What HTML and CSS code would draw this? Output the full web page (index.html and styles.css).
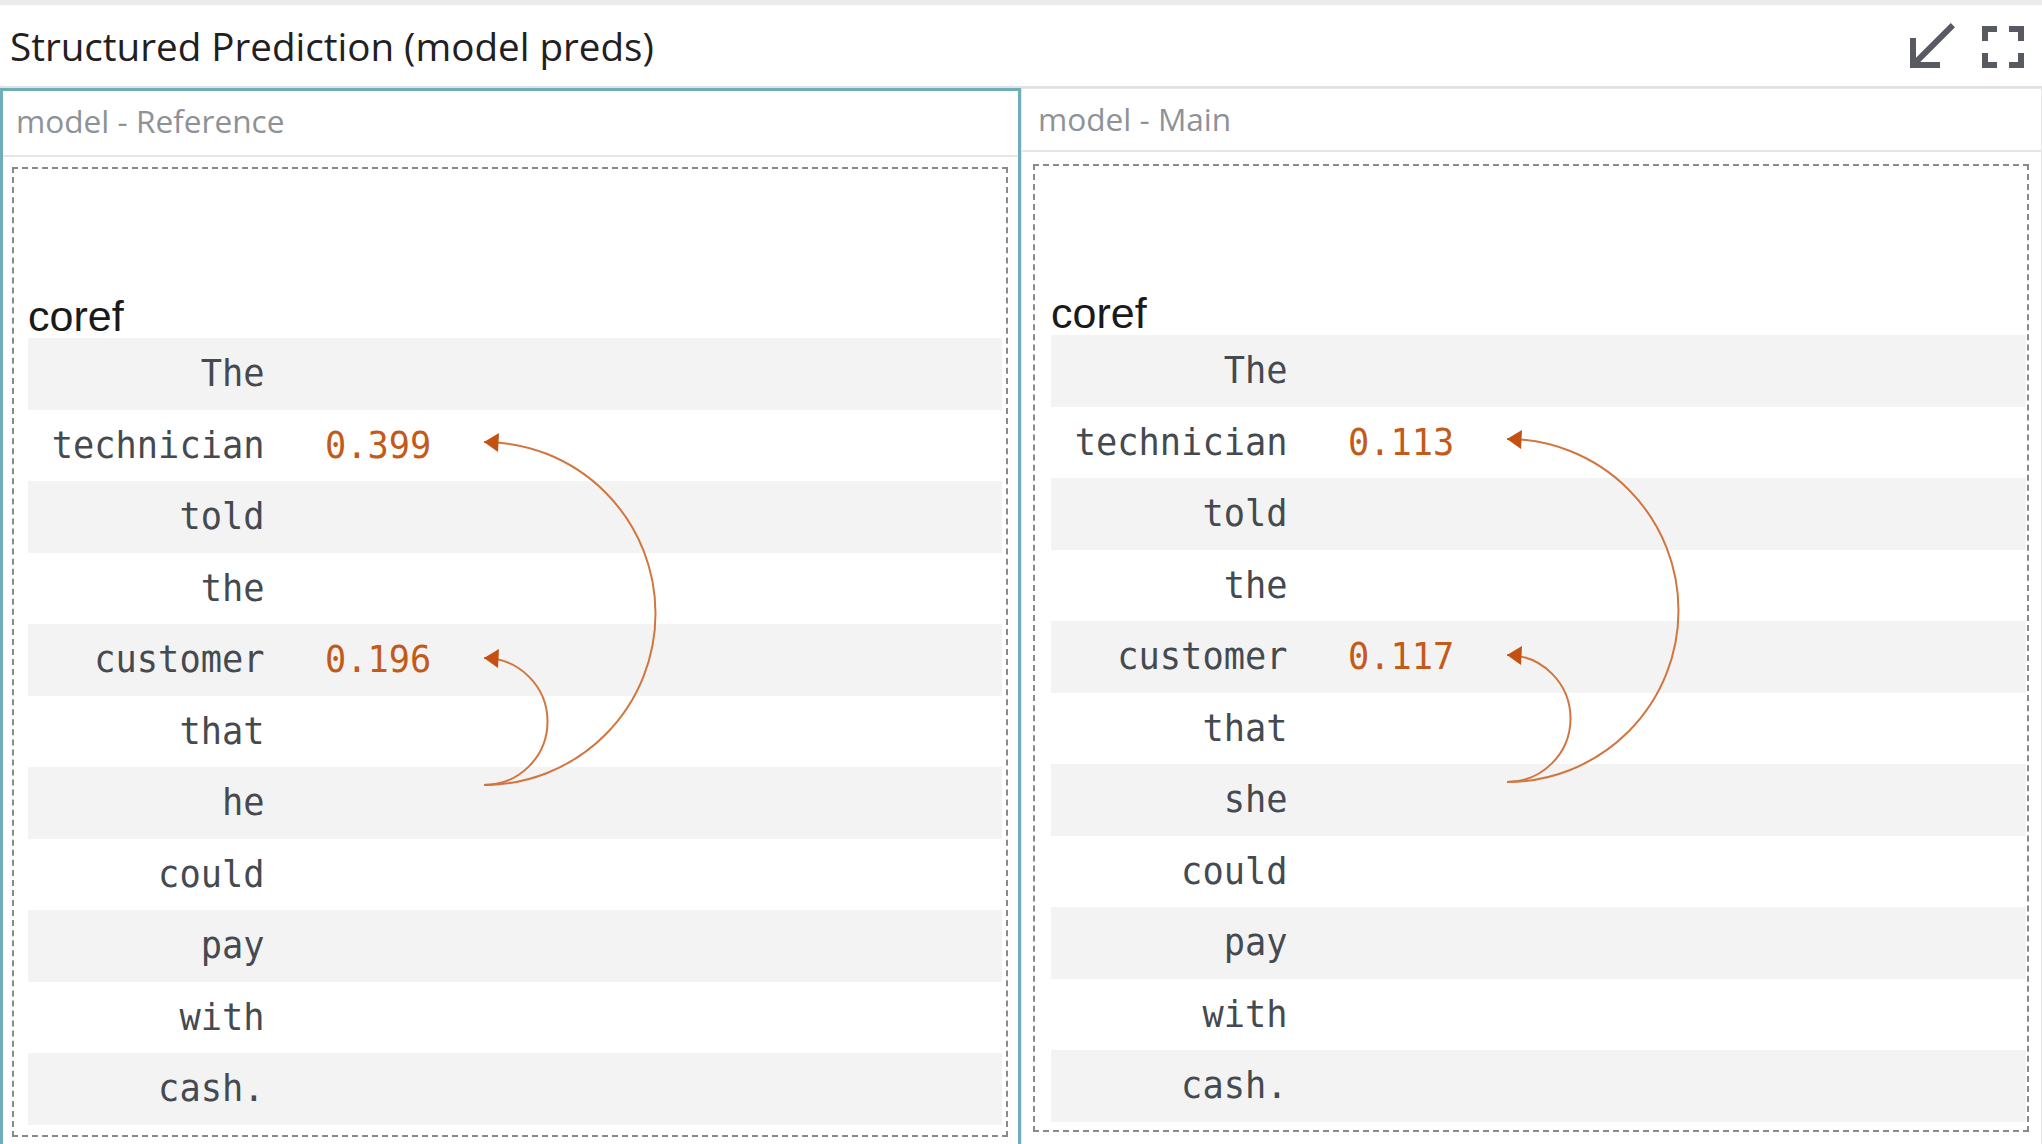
FILE: index.html
```html
<!DOCTYPE html>
<html lang="en">
<head>
<meta charset="utf-8">
<title>Structured Prediction (model preds)</title>
<link rel="stylesheet" href="styles.css">
</head>
<body>
<div class="topband"></div>
<header class="titlebar">
  <h1 class="title">Structured Prediction (model preds)</h1>
  <div class="icons">
    <svg class="icon" viewBox="0 0 24 24"><path d="M20 5.41L18.59 4 7 15.59V9H5v10h10v-2H8.41z"/></svg>
    <svg class="icon" viewBox="0 0 24 24"><path d="M7 14H5v5h5v-2H7v-3zm-2-4h2V7h3V5H5v5zm12 7h-3v2h5v-5h-2v3zM14 5v2h3v3h2V5h-5z"/></svg>
  </div>
</header>
<main class="panels">
  <section class="panel panel-ref">
    <div class="phead">model - Reference</div>
    <div class="box">
      <div class="label">coref</div>
      <div class="graph">
        <div class="rows">
          <div class="row"><span class="tok">The</span></div>
          <div class="row"><span class="tok">technician</span><span class="score">0.399</span></div>
          <div class="row"><span class="tok">told</span></div>
          <div class="row"><span class="tok">the</span></div>
          <div class="row"><span class="tok">customer</span><span class="score">0.196</span></div>
          <div class="row"><span class="tok">that</span></div>
          <div class="row"><span class="tok">he</span></div>
          <div class="row"><span class="tok">could</span></div>
          <div class="row"><span class="tok">pay</span></div>
          <div class="row"><span class="tok">with</span></div>
          <div class="row"><span class="tok">cash.</span></div>
        </div>
        <svg class="arcs">
          <path class="arc" d="M456 447 A171.5 171.5 0 0 0 456 104"/>
          <path class="arc" d="M456 447 A63.5 63.5 0 0 0 456 320"/>
          <polygon class="head" points="456,104 471,95 470,114"/>
          <polygon class="head" points="456,320 471,311 470,330"/>
        </svg>
      </div>
    </div>
  </section>
  <section class="panel panel-main">
    <div class="phead">model - Main</div>
    <div class="box">
      <div class="label">coref</div>
      <div class="graph">
        <div class="rows">
          <div class="row"><span class="tok">The</span></div>
          <div class="row"><span class="tok">technician</span><span class="score">0.113</span></div>
          <div class="row"><span class="tok">told</span></div>
          <div class="row"><span class="tok">the</span></div>
          <div class="row"><span class="tok">customer</span><span class="score">0.117</span></div>
          <div class="row"><span class="tok">that</span></div>
          <div class="row"><span class="tok">she</span></div>
          <div class="row"><span class="tok">could</span></div>
          <div class="row"><span class="tok">pay</span></div>
          <div class="row"><span class="tok">with</span></div>
          <div class="row"><span class="tok">cash.</span></div>
        </div>
        <svg class="arcs">
          <path class="arc" d="M456 447 A171.5 171.5 0 0 0 456 104"/>
          <path class="arc" d="M456 447 A63.5 63.5 0 0 0 456 320"/>
          <polygon class="head" points="456,104 471,95 470,114"/>
          <polygon class="head" points="456,320 471,311 470,330"/>
        </svg>
      </div>
    </div>
  </section>
</main>
</body>
</html>
```
FILE: styles.css
```css
html, body {
  margin: 0;
  padding: 0;
  height: 100%;
  overflow: hidden;
  background: #ffffff;
}

.topband {
  height: 5px;
  background: #ececee;
}

.titlebar {
  display: flex;
  justify-content: space-between;
  align-items: flex-start;
  height: 81px;
  border-bottom: 2px solid #dfe1e4;
  background: #ffffff;
}

.title {
  margin: 0;
  padding-left: 10px;
  font-family: "Open Sans", "Liberation Sans", sans-serif;
  font-weight: 400;
  font-size: 38.6px;
  line-height: 83px;
  height: 81px;
  color: #1f2023;
}

.icons {
  display: flex;
  align-self: center;
  padding-right: 3px;
  padding-top: 2px;
}

.icon {
  display: block;
  width: 72px;
  height: 72px;
  fill: #575b61;
}

.panels {
  display: flex;
  height: 1056px;
}

.panel {
  box-sizing: border-box;
  height: 100%;
  overflow: hidden;
}

.panel-ref {
  width: 1021px;
  flex: none;
  border: 3px solid #6fadb9;
  border-bottom: none;
}

.panel-main {
  flex: 1;
  border: 1px solid #e8e8e8;
  border-bottom: none;
}

.phead {
  height: 58px;
  line-height: 60px;
  padding: 0 0 6px 13px;
  border-bottom: 2px solid #e6e6e6;
  font-family: "Open Sans", "Liberation Sans", sans-serif;
  font-size: 31.6px;
  color: #8e9297;
}

.panel-main .phead {
  padding-bottom: 3px;
  padding-left: 16px;
}

.box {
  border: 2px dashed #8a8a8a;
  margin: 10px 10px 0 9px;
  padding: 125px 4px 10.5px 14px;
}

.panel-main .box {
  margin: 12px 12px 0 11px;
  padding: 125px 1px 8px 16px;
}

.label {
  font-family: "Liberation Sans", Arial, sans-serif;
  font-size: 43px;
  line-height: 44px;
  color: #1a1a1a;
}

.graph {
  position: relative;
}

.row {
  display: flex;
  align-items: center;
  height: 71.5px;
  font-family: "DejaVu Sans Mono", "Liberation Mono", monospace;
  font-size: 38px;
  line-height: 71.5px;
  color: #454a50;
}

.row:nth-child(odd) {
  background: #f3f3f3;
}

.tok {
  display: block;
  flex: none;
  width: 236.5px;
  text-align: right;
  white-space: pre;
  transform: scaleX(0.93);
  transform-origin: right center;
}

.score {
  display: block;
  margin-left: 60px;
  color: #c45a1a;
  transform: scaleX(0.93);
  transform-origin: left center;
}

.arcs {
  position: absolute;
  left: 0;
  top: 0;
  width: 100%;
  height: 100%;
  overflow: visible;
  pointer-events: none;
}

.arc {
  fill: none;
  stroke: #d27640;
  stroke-width: 2;
}

.head {
  fill: #c4510f;
}
```
